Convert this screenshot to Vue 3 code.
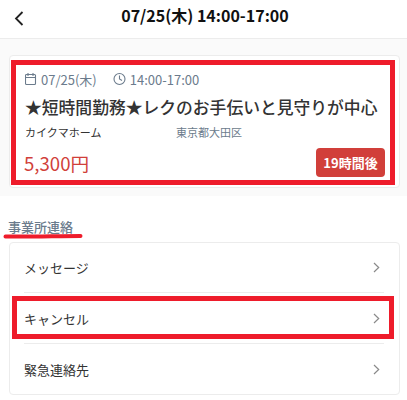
<template>
  <div class="page">
    <header class="top">
      <button class="back">
        <svg width="12" height="16" viewBox="0 0 12 16"><path d="M9.5 2 L3 8.5 L9.5 15" fill="none" stroke="#222" stroke-width="1.8" /></svg>
      </button>
      <h1>07/25(木) 14:00-17:00</h1>
    </header>

    <section class="summary">
      <div class="card">
        <div class="mark">
          <div class="when">
            <svg width="14" height="14" viewBox="0 0 14 14" fill="none" stroke="#6b7b8c" stroke-width="1.1">
              <rect x="0.5" y="2.5" width="10" height="10" rx="1" />
              <path d="M0.5 5.5h10M3 1v3M8 1v3" />
            </svg>
            <span class="date">07/25(木)</span>
            <svg class="clock" width="14" height="14" viewBox="0 0 14 14" fill="none" stroke="#6b7b8c" stroke-width="1.1">
              <circle cx="6.5" cy="7" r="5.5" />
              <path d="M6.5 3.5V7l2.5 1.5" />
            </svg>
            <span>14:00-17:00</span>
          </div>
          <div class="title">★短時間勤務★レクのお手伝いと見守りが中心</div>
          <div class="place">
            <span class="home">カイクマホーム</span>
            <span class="area">東京都大田区</span>
          </div>
          <div class="bottom">
            <span class="price">5,300円</span>
            <span class="badge">19時間後</span>
          </div>
        </div>
      </div>
    </section>

    <section class="contact">
      <h2>事業所連絡</h2>
      <svg class="scribble" width="80" height="6" viewBox="0 0 80 6"><path d="M2.5 3.5 C 25 4, 55 3, 77.5 3" fill="none" stroke="#ee1c2b" stroke-width="4" stroke-linecap="round" /></svg>
      <ul class="list">
        <li v-for="item in items" :key="item.label" :class="{ picked: item.picked }">
          <span>{{ item.label }}</span>
          <svg width="7" height="11" viewBox="0 0 7 11"><path d="M1 1 L5.7 5.5 L1 10" fill="none" stroke="#8a8a8a" stroke-width="1.2" /></svg>
        </li>
      </ul>
    </section>
  </div>
</template>

<script setup>
const items = [
  { label: 'メッセージ' },
  { label: 'キャンセル', picked: true },
  { label: '緊急連絡先' }
]
</script>

<style scoped>
.page {
  width: 407px;
  height: 400px;
  overflow: hidden;
  background: #fff;
  color: #333;
  font-family: "Noto Sans CJK JP", "Noto Sans", sans-serif;
}

.top {
  position: relative;
  height: 30px;
  padding: 0 0 8px 3px;
  display: flex;
  align-items: center;
  justify-content: center;
  border-bottom: 1px solid #ececec;
}
.top h1 {
  margin: 0;
  font-size: 16px;
  font-weight: 700;
  color: #111;
}
.back {
  position: absolute;
  left: 13px;
  top: 10px;
  padding: 0;
  border: 0;
  background: none;
  line-height: 0;
}

.summary {
  height: 157px;
  padding: 16px 7px 0 9px;
  box-sizing: border-box;
  background: #fafafa;
}
.card {
  height: 133px;
  padding: 4px 4px 0 1px;
  box-sizing: border-box;
  background: #fff;
  border: 1px solid #ececec;
  border-radius: 4px;
}
.mark {
  height: 125px;
  padding: 4px 5px 0 9px;
  box-sizing: border-box;
  border: 5px solid #ee1c2b;
}

.when {
  display: flex;
  align-items: center;
  height: 20px;
  font-size: 13px;
  color: #6b7b8c;
}
.when svg { margin-right: 2px; }
.when .clock { margin-right: 3px; }
.when .date { margin-right: 16px; }

.title {
  margin-top: 6px;
  font-size: 16.8px;
  line-height: 25px;
  font-weight: 500;
  color: #333;
  white-space: nowrap;
}

.place {
  display: flex;
  margin-top: 3px;
  font-size: 11px;
  line-height: 18px;
}
.home { width: 151px; }
.area { color: #6b7b8c; }

.bottom {
  display: flex;
  align-items: center;
  justify-content: space-between;
  margin-top: 7px;
}
.price {
  margin-left: -1px;
  font-size: 18.6px;
  color: #d13f3a;
}
.badge {
  width: 69px;
  height: 29px;
  display: flex;
  align-items: center;
  justify-content: center;
  border-radius: 4px;
  background: #d13f3a;
  color: #fff;
  font-size: 13px;
  font-weight: 700;
}

.contact {
  position: relative;
  padding: 22px 7px 0 9px;
}
.contact h2 {
  margin: 0 0 6px -1px;
  font-size: 13px;
  line-height: 18px;
  font-weight: 500;
  color: #6b7b8c;
}
.scribble {
  position: absolute;
  left: 3px;
  top: 37px;
}

.list {
  margin: 0;
  padding: 0 15px 0 14px;
  list-style: none;
  border: 1px solid #ececec;
  border-radius: 4px;
}
.list li {
  position: relative;
  height: 50px;
  display: flex;
  align-items: center;
  justify-content: space-between;
  padding-right: 4px;
  font-size: 13px;
  color: #333;
  border-bottom: 1px solid #ececec;
  box-sizing: border-box;
}
.list li:last-child { border-bottom: 0; }
.list li.picked { height: 51px; }
.list li.picked::after {
  content: "";
  position: absolute;
  left: -12px;
  right: -10px;
  top: 3px;
  height: 43px;
  border: 5px solid #ee1c2b;
  box-sizing: border-box;
}
</style>
